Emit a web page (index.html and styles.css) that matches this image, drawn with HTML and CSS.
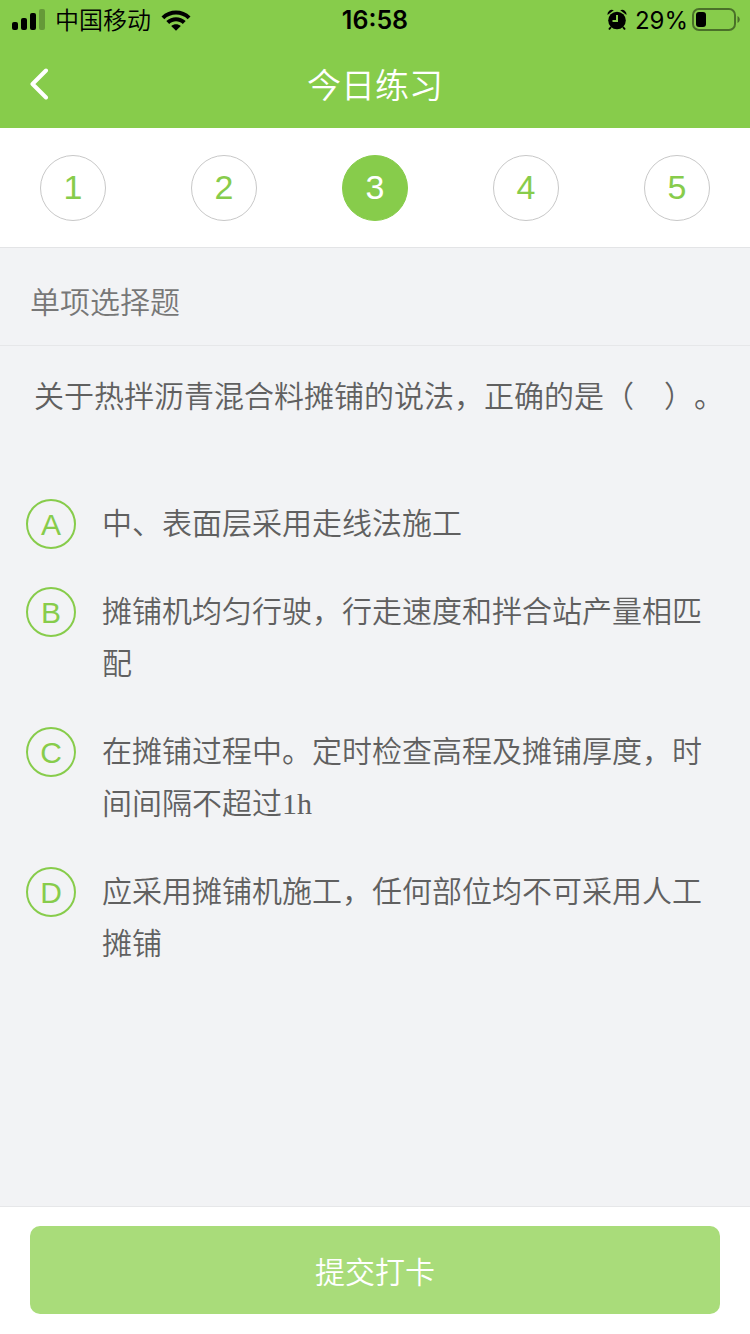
FILE: index.html
```html
<!DOCTYPE html>
<html lang="zh-CN">
<head>
    <meta charset="UTF-8">
    <meta name="viewport" content="width=device-width, initial-scale=1.0">
    <title>今日练习</title>
    <link rel="stylesheet" href="styles.css">
</head>
<body>
    <div class="page">
        <header class="header">
            <div class="status-bar">
                <div class="status-left">
                    <svg class="signal" width="33" height="22" viewBox="0 0 33 22">
                        <rect x="0" y="13" width="6" height="8" rx="2"/>
                        <rect x="9" y="9" width="6" height="12" rx="2"/>
                        <rect x="18" y="4" width="6" height="17" rx="2"/>
                        <rect x="27" y="0" width="6" height="21" rx="2" opacity="0.25"/>
                    </svg>
                    <span class="carrier">中国移动</span>
                    <svg class="wifi" width="30" height="22" viewBox="0 0 30 22">
                        <path d="M0.5 7.4C8.500-.4 21.500-.4 29.500 7.400L26.700 10.200C20.200 4 9.800 4 3.300 10.200Z"/>
                        <path d="M5.300 12.100C10.800 7 19.200 7 24.700 12.100L21.800 14.900C18 11.500 12 11.500 8.200 14.900Z"/>
                        <path d="M10.200 16.900C13 14.600 17 14.600 19.800 16.900L15 21.700Z"/>
                    </svg>
                </div>
                <span class="time">16:58</span>
                <div class="status-right">
                    <svg class="alarm" width="20" height="22" viewBox="0 0 20 22">
                        <circle cx="10" cy="11.500" r="8.800"/>
                        <path d="M0.500 6A4.500 4.500 0 0 1 6.800 1.200ZM19.500 6A4.500 4.500 0 0 0 13.200 1.200Z"/>
                        <path class="alarm-legs" d="M4 18L2 20.500M16 18L18 20.500"/>
                        <path class="alarm-hands" d="M10 6V12H5.500"/>
                    </svg>
                    <span class="percent">29%</span>
                    <svg class="battery" width="48" height="24" viewBox="0 0 48 24">
                        <rect class="battery-case" x="1" y="1" width="42" height="21" rx="6"/>
                        <rect x="4" y="4" width="10" height="15" rx="3"/>
                        <path d="M45.500 8C48.500 9.500 48.500 13.500 45.500 15Z" opacity="0.45"/>
                    </svg>
                </div>
            </div>
            <div class="nav-bar">
                <button type="button" class="back" aria-label="返回">
                    <svg width="20" height="32" viewBox="0 0 20 32">
                        <path d="M16 2.500L2.500 16L16 29.500"/>
                    </svg>
                </button>
                <h1>今日练习</h1>
            </div>
        </header>

        <nav class="steps">
            <button type="button" class="step">1</button>
            <button type="button" class="step">2</button>
            <button type="button" class="step active">3</button>
            <button type="button" class="step">4</button>
            <button type="button" class="step">5</button>
        </nav>

        <h2 class="question-type">单项选择题</h2>

        <main class="question">
            <p class="question-text">关于热拌沥青混合料摊铺的说法，正确的是（&#12288;）。</p>
            <div class="options">
                <button type="button" class="option">
                    <span class="letter">A</span>
                    <span class="option-text">中、表面层采用走线法施工</span>
                </button>
                <button type="button" class="option">
                    <span class="letter">B</span>
                    <span class="option-text">摊铺机均匀行驶，行走速度和拌合站产量相匹配</span>
                </button>
                <button type="button" class="option">
                    <span class="letter">C</span>
                    <span class="option-text">在摊铺过程中。定时检查高程及摊铺厚度，时间间隔不超过1h</span>
                </button>
                <button type="button" class="option">
                    <span class="letter">D</span>
                    <span class="option-text">应采用摊铺机施工，任何部位均不可采用人工摊铺</span>
                </button>
            </div>
        </main>

        <footer class="footer">
            <button type="button" class="submit">提交打卡</button>
        </footer>
    </div>
</body>
</html>
```
FILE: styles.css
```css
* {
    box-sizing: border-box;
}

body {
    margin: 0;
    background-color: #f2f3f5;
    font-family: Inter, "Noto Sans CJK SC", sans-serif;
    font-weight: 350;
    text-spacing-trim: space-all;
}

button {
    margin: 0;
    padding: 0;
    border: none;
    background: none;
    font: inherit;
    cursor: pointer;
}

h1, h2, p {
    margin: 0;
    font-weight: 350;
}

.page {
    display: flex;
    flex-direction: column;
    min-height: 100vh;
}

.header {
    background-color: #87cc4b;
}

.status-bar {
    display: grid;
    grid-template-columns: 1fr auto 1fr;
    align-items: center;
    height: 40px;
    padding: 0 12px;
    font-size: 24px;
    line-height: 38px;
    color: #000;
}

.status-left, .status-right {
    display: flex;
    align-items: center;
    height: 40px;
}

.status-left {
    gap: 10px;
}

.status-right {
    justify-content: flex-end;
    gap: 4px;
    margin-right: -2px;
}

.carrier {
    padding-top: 2px;
}

.percent {
    padding-top: 2px;
    font-weight: 400;
}

.alarm {
    margin-right: 4px;
}

.time {
    font-size: 25px;
    font-weight: 600;
}

.alarm-legs {
    stroke: #000;
    stroke-width: 2;
}

.alarm-hands {
    fill: none;
    stroke: #87cc4b;
    stroke-width: 2;
}

.battery-case {
    fill: none;
    stroke: #000;
    stroke-width: 2;
    opacity: 0.45;
}

.nav-bar {
    display: grid;
    grid-template-columns: 60px 1fr 60px;
    align-items: center;
    height: 88px;
    padding: 0 30px;
}

.back {
    display: flex;
    height: 60px;
    align-items: center;
}

.back path {
    fill: none;
    stroke: #fff;
    stroke-width: 4;
    stroke-linecap: round;
    stroke-linejoin: round;
}

.nav-bar h1 {
    padding-top: 4px;
    font-size: 34px;
    line-height: 48px;
    text-align: center;
    color: #fff;
}

.steps {
    display: flex;
    justify-content: space-between;
    align-items: center;
    height: 120px;
    padding: 0 40px;
    background-color: #fff;
    border-bottom: 1px solid #e3e4e6;
}

.step {
    width: 66px;
    height: 66px;
    border: 1px solid #c8c8c8;
    border-radius: 50%;
    font-family: "Liberation Sans", sans-serif;
    font-size: 34px;
    font-weight: 400;
    color: #87cc4b;
}

.step.active {
    border-color: #87cc4b;
    background-color: #87cc4b;
    color: #fff;
}

.question-type {
    padding: 30px 30px 19px;
    border-bottom: 1px solid #e6e7e9;
    font-size: 30px;
    line-height: 48px;
    color: #777;
}

.question {
    flex: 1;
    padding: 24px 26px;
    font-size: 30px;
    color: #606060;
}

.question-text {
    padding: 0 0 0 8px;
    line-height: 52px;
}

.options {
    display: flex;
    flex-direction: column;
    gap: 36px;
    margin-top: 76px;
}

.option {
    display: flex;
    align-items: flex-start;
    gap: 26px;
    line-height: 52px;
    text-align: left;
    color: inherit;
}

.letter {
    flex: none;
    width: 50px;
    height: 50px;
    margin-top: 1px;
    border: 2px solid #87cc4b;
    border-radius: 50%;
    font-family: "Liberation Sans", sans-serif;
    font-size: 30px;
    font-weight: 400;
    line-height: 48px;
    text-align: center;
    color: #87cc4b;
}

.option-text {
    font-family: "Liberation Serif", "Noto Sans CJK SC", serif;
}

.footer {
    padding: 19px 30px 20px;
    background-color: #fff;
    border-top: 1px solid #e6e7e9;
}

.submit {
    width: 100%;
    height: 88px;
    border-radius: 10px;
    background-color: #a9dc7a;
    font-size: 30px;
    color: #fff;
}
```
